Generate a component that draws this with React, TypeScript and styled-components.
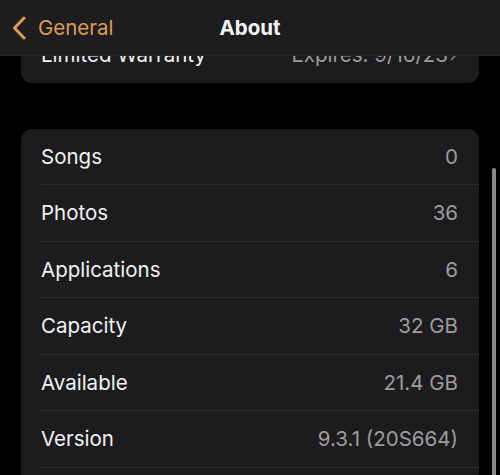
import React from "react";
import styled, { createGlobalStyle } from "styled-components";

const GlobalStyle = createGlobalStyle`
  html, body {
    margin: 0;
    padding: 0;
    background: #000;
  }
  body {
    font-family: Inter, "Liberation Sans", sans-serif;
    -webkit-font-smoothing: antialiased;
  }
`;

const Screen = styled.div`
  position: relative;
  width: 500px;
  height: 475px;
  overflow: hidden;
  background: #000;
`;

const NavBar = styled.div`
  position: absolute;
  top: 0;
  left: 0;
  right: 0;
  height: 55px;
  background: #1d1d1f;
  border-bottom: 1px solid #262628;
  display: flex;
  align-items: center;
  justify-content: center;
  z-index: 2;
`;

const BackButton = styled.div`
  position: absolute;
  left: 12px;
  top: 0;
  height: 55px;
  display: flex;
  align-items: center;
  gap: 12px;
  color: #dc9b57;
  font-size: 20.5px;
`;

const Title = styled.div`
  color: #f5f5f5;
  font-size: 20.5px;
  font-weight: 700;
`;

const Content = styled.div`
  display: flex;
  flex-direction: column;
  gap: 46px;
  padding: 26px 21px 0 21px;
`;

const Card = styled.div<{ $continues?: boolean }>`
  background: #1c1c1e;
  border-radius: 11px;
  overflow: hidden;
  padding-bottom: ${(p) => (p.$continues ? "48px" : "0")};
`;

const Row = styled.div<{ $last?: boolean }>`
  height: 56.5px;
  margin-left: 20px;
  padding-right: 21px;
  display: flex;
  align-items: center;
  justify-content: space-between;
  box-sizing: border-box;
  border-bottom: ${(p) => (p.$last ? "none" : "1px solid #2d2d30")};
`;

const Label = styled.span`
  color: #f2f2f2;
  font-size: 20.5px;
`;

const Value = styled.span`
  color: #9c9c9f;
  font-size: 20.5px;
  display: flex;
  align-items: center;
  gap: 2px;
`;

const ScrollBar = styled.div`
  position: absolute;
  left: 492px;
  top: 168px;
  width: 4px;
  height: 330px;
  border-radius: 2px;
  background: #8a8a8c;
`;

const stats = [
  { label: "Songs", value: "0" },
  { label: "Photos", value: "36" },
  { label: "Applications", value: "6" },
  { label: "Capacity", value: "32 GB" },
  { label: "Available", value: "21.4 GB" },
  { label: "Version", value: "9.3.1 (20S664)" },
];

function BackChevron() {
  return (
    <svg width="14" height="24" viewBox="0 0 14 24" fill="none">
      <path
        d="M12 2 L2.5 12 L12 22"
        stroke="#dc9b57"
        strokeWidth="3"
        strokeLinecap="round"
        strokeLinejoin="round"
      />
    </svg>
  );
}

function App() {
  return (
    <Screen>
      <GlobalStyle />
      <NavBar>
        <BackButton>
          <BackChevron />
          General
        </BackButton>
        <Title>About</Title>
      </NavBar>
      <Content>
        <Card>
          <Row $last>
            <Label>Limited Warranty</Label>
            <Value>
              Expires: 9/16/23
              <svg width="8" height="14" viewBox="0 0 8 14" fill="none">
                <path
                  d="M1.5 1.5 L6.5 7 L1.5 12.5"
                  stroke="#6e6e72"
                  strokeWidth="2"
                  strokeLinecap="round"
                  strokeLinejoin="round"
                />
              </svg>
            </Value>
          </Row>
        </Card>
        <Card $continues>
          {stats.map((s) => (
            <Row key={s.label}>
              <Label>{s.label}</Label>
              <Value>{s.value}</Value>
            </Row>
          ))}
        </Card>
      </Content>
      <ScrollBar />
    </Screen>
  );
}

export default App;
